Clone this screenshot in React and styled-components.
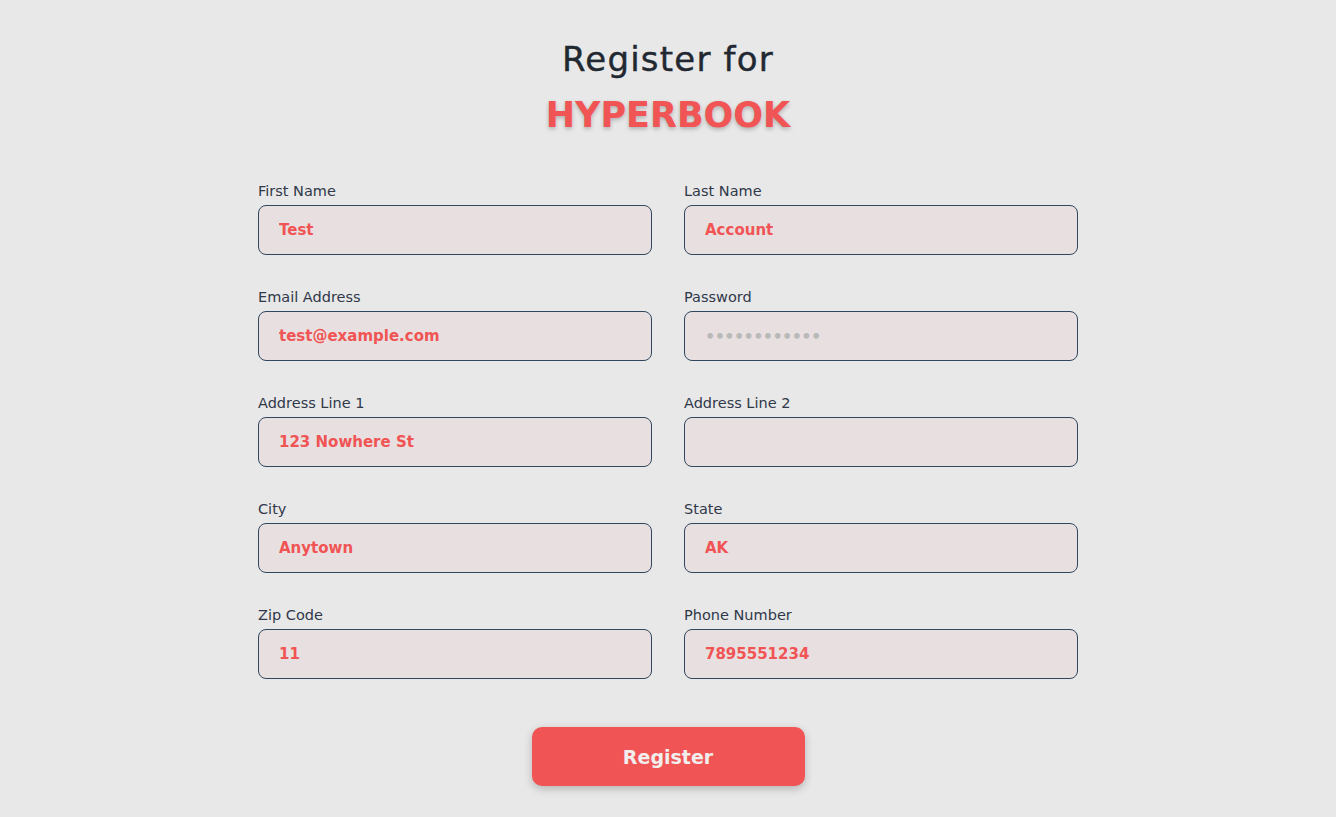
import styled, { createGlobalStyle } from "styled-components";

const GlobalStyle = createGlobalStyle`
    html, body {
        margin: 0;
        padding: 0;
        background: #e8e8e8;
        font-family: "DejaVu Sans", "Open Sans", sans-serif;
    }
`
const Page = styled.main`
    display: flex;
    flex-direction: column;
    align-items: center;
    padding-top: 35px;
    min-height: 817px;
    box-sizing: border-box;
`
const Heading = styled.h1`
    margin: 0;
    display: flex;
    flex-direction: column;
    align-items: center;
    font-weight: 500;
    font-size: 34px;
    letter-spacing: 1.2px;
    line-height: 48px;
    color: #222831;
    -webkit-text-stroke: 0.4px #222831;
`
const Brand = styled.span`
    margin-top: 8px;
    font-size: 35px;
    font-weight: 700;
    letter-spacing: 0;
    line-height: 48px;
    color: #f05454;
    -webkit-text-stroke: 0;
    text-shadow: 0 2px 4px rgba(0, 0, 0, 0.25);
`
const Form = styled.form`
    margin-top: 44px;
    display: flex;
    flex-direction: column;
    align-items: center;
`
const Grid = styled.div`
    display: grid;
    grid-template-columns: 394px 394px;
    column-gap: 32px;
    row-gap: 34px;
`
const Field = styled.label`
    display: flex;
    flex-direction: column;
    gap: 5px;
`
const Label = styled.span`
    font-size: 14.5px;
    line-height: 17px;
    color: #30384a;
`
const Input = styled.input`
    box-sizing: border-box;
    width: 100%;
    height: 50px;
    padding: 0 20px;
    border: 1px solid #30475e;
    border-radius: 8px;
    background: #e8dfe0;
    font-family: inherit;
    font-size: 15px;
    font-weight: 700;
    color: #f05454;
    outline: none;
    &[type="password"] {
        color: #b9b9b9;
        font-size: 16px;
        letter-spacing: -0.6px;
    }
`
const SubmitButton = styled.button`
    margin-top: 48px;
    width: 273px;
    height: 59px;
    border: none;
    border-radius: 10px;
    background: #f05454;
    color: #f1eeee;
    font-family: inherit;
    font-size: 19px;
    font-weight: 700;
    box-shadow: 0 3px 8px rgba(0, 0, 0, 0.22);
    &&:hover {
        cursor: pointer;
    }
`

const fields = [
    ["First Name", "Test"],
    ["Last Name", "Account"],
    ["Email Address", "test@example.com"],
    ["Password", "secretpass12", "password"],
    ["Address Line 1", "123 Nowhere St"],
    ["Address Line 2", ""],
    ["City", "Anytown"],
    ["State", "AK"],
    ["Zip Code", "11"],
    ["Phone Number", "7895551234"],
]

function App() {
    return (<>
        <GlobalStyle />
        <Page>
            <Heading>
                Register for
                <Brand>HYPERBOOK</Brand>
            </Heading>
            <Form onSubmit={e => e.preventDefault()}>
                <Grid>
                    {fields.map(([label, value, type]) => (
                        <Field key={label}>
                            <Label>{label}</Label>
                            <Input type={type || "text"} defaultValue={value} />
                        </Field>
                    ))}
                </Grid>
                <SubmitButton type="submit">Register</SubmitButton>
            </Form>
        </Page>
    </>)
}

export default App
